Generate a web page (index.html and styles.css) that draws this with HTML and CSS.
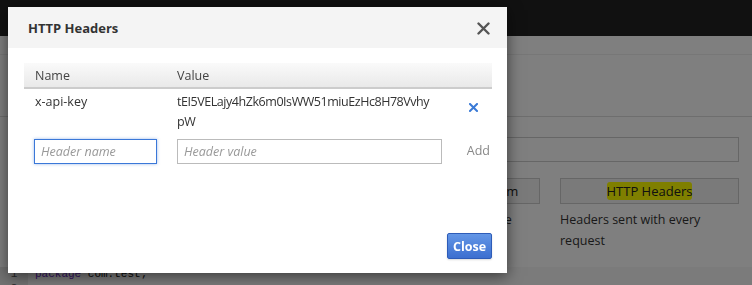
FILE: index.html
```html
<!DOCTYPE html>
<html lang="en">
<head>
    <meta charset="UTF-8">
    <meta name="viewport" content="width=device-width, initial-scale=1.0">
    <title>HTTP Headers</title>
    <link rel="stylesheet" href="styles.css">
</head>
<body>
    <div class="topbar"></div>

    <div class="page">
        <div class="page-head"></div>
        <div class="page-section">
            <div class="field-row">
                <div class="fake-input"></div>
            </div>
            <div class="option-grid">
                <div class="option">
                    <div class="option-btn">Request Body</div>
                    <div class="option-desc">Body sent with the request</div>
                </div>
                <div class="option">
                    <div class="option-btn">Request Body as Form</div>
                    <div class="option-desc">Form values posted in the request body</div>
                </div>
                <div class="option">
                    <div class="option-btn"><span class="highlight">HTTP Headers</span></div>
                    <div class="option-desc">Headers sent with every request</div>
                </div>
            </div>
        </div>
        <div class="editor">
            <div class="editor-line"><span class="gutter">1</span><span class="code"><span class="kw">package</span> com.test;</span></div>
            <div class="editor-line"><span class="gutter">2</span><span class="code"></span></div>
        </div>
    </div>

    <div class="overlay"></div>

    <div class="modal">
        <div class="modal-header">
            <h3>HTTP Headers</h3>
            <svg class="modal-close" width="13" height="13" viewBox="0 0 13 13">
                <path d="M1.5 1.5 L11.5 11.5 M11.5 1.5 L1.5 11.5" stroke="#555" stroke-width="2.4" stroke-linecap="round"/>
            </svg>
        </div>
        <div class="modal-body">
            <table class="headers-table">
                <colgroup>
                    <col style="width: 142px">
                    <col style="width: 279px">
                    <col style="width: 47px">
                </colgroup>
                <thead>
                    <tr>
                        <th>Name</th>
                        <th>Value</th>
                        <th></th>
                    </tr>
                </thead>
                <tbody>
                    <tr class="header-row">
                        <td>x-api-key</td>
                        <td class="value-cell">tEI5VELajy4hZk6m0IsWW51miuEzHc8H78Vvhy<wbr>pW</td>
                        <td class="action-cell">
                            <svg class="remove-icon" width="9" height="9" viewBox="0 0 9 9">
                                <path d="M1 1 L8 8 M8 1 L1 8" stroke="#3a7ad6" stroke-width="2" stroke-linecap="square"/>
                            </svg>
                        </td>
                    </tr>
                    <tr class="new-row">
                        <td><input type="text" class="focused" placeholder="Header name"></td>
                        <td class="value-cell"><input type="text" class="value-input" placeholder="Header value"></td>
                        <td class="add-cell">Add</td>
                    </tr>
                </tbody>
            </table>
        </div>
        <div class="modal-footer">
            <button class="btn-close">Close</button>
        </div>
    </div>
</body>
</html>
```

FILE: styles.css
```css
body {
    margin: 0;
    padding: 0;
    font-family: 'Open Sans', 'Noto Sans', sans-serif;
    background: #fff;
    color: #333;
    overflow: hidden;
    height: 285px;
}

/* page behind the dialog */

.topbar {
    height: 36px;
    background-color: #222;
}

.page-head {
    height: 18px;
    border-bottom: 1px solid #eee;
}

.page-section {
    padding: 0 13px 0 162px;
    border-top: 1px solid #ddd;
    margin-top: 61px;
}

.field-row {
    padding-top: 20px;
}

.fake-input {
    height: 23px;
    border: 1px solid #ccc;
}

.option-grid {
    display: grid;
    grid-template-columns: repeat(3, 1fr);
    gap: 20px;
    margin-top: 16px;
}

.option-btn {
    height: 24px;
    border: 1px solid #ccc;
    background: #f5f5f5;
    text-align: center;
    font-size: 13px;
    line-height: 24px;
    color: #222;
}

.highlight {
    background: #ffff00;
    border-radius: 3px;
}

.option-desc {
    font-size: 12.5px;
    line-height: 21px;
    color: #333;
    margin-top: 5px;
}

.editor {
    margin-top: 16px;
    background: #f7f7f7;
    font-family: 'Liberation Mono', monospace;
    font-size: 11px;
}

.editor-line {
    display: flex;
    height: 14px;
    line-height: 14px;
}

.gutter {
    width: 28px;
    background: #e4e4e4;
    color: #555;
    text-align: center;
}

.code {
    padding-left: 7px;
    color: #111;
}

.kw {
    color: #6b28c8;
}

.overlay {
    position: fixed;
    inset: 0;
    background: rgba(0, 0, 0, 0.5);
}

/* dialog */

.modal {
    position: absolute;
    left: 8px;
    top: 7px;
    width: 499px;
    height: 266px;
    background: #fff;
    box-shadow: 0 3px 14px rgba(0, 0, 0, 0.55);
    display: flex;
    flex-direction: column;
}

.modal-header {
    height: 41px;
    background: #f4f4f4;
    display: flex;
    align-items: center;
    justify-content: space-between;
    padding: 0 17px 0 20px;
}

.modal-header h3 {
    margin: 0;
    font-size: 13px;
    font-weight: 700;
    color: #333;
}

.modal-close {
    margin-top: 1px;
}

.modal-body {
    padding: 15px 15px 0 16px;
    flex: 1;
}

.headers-table {
    width: 468px;
    table-layout: fixed;
    border-collapse: collapse;
    font-size: 12.5px;
    color: #333;
}

.headers-table th {
    text-align: left;
    font-weight: 400;
    color: #444;
    height: 24px;
    padding: 0 11px;
    background: linear-gradient(#fafafa, #e9e9e9);
    border-bottom: 2px solid #ccc;
}

.headers-table td {
    padding: 3px 11px 0;
    line-height: 20px;
    vertical-align: top;
}

.value-cell {
    letter-spacing: -0.45px;
    padding-right: 3px !important;
}

.action-cell {
    text-align: right;
    padding-top: 9px !important;
    padding-right: 14px !important;
}

.header-row td {
    height: 37px;
}

.new-row td {
    padding-top: 4px;
    vertical-align: top;
}

.new-row td:first-child {
    padding-left: 10px;
    padding-right: 9px;
}

input {
    width: 100%;
    box-sizing: border-box;
    height: 25px;
    border: 1px solid #bbb;
    font-family: 'Open Sans', 'Noto Sans', sans-serif;
    font-size: 12.5px;
    letter-spacing: 0;
    padding: 0 6px;
    color: #333;
    outline: none;
}

input::placeholder {
    font-style: italic;
    color: #999;
}

input.focused {
    border-color: #3b78d8;
    box-shadow: 0 0 3px rgba(59, 120, 216, 0.5);
}

.add-cell {
    color: #888;
    padding-top: 9px !important;
    line-height: 14px !important;
    padding-left: 0 !important;
    padding-right: 2px !important;
    text-align: right;
}

.modal-footer {
    display: flex;
    justify-content: flex-end;
    padding: 0 15px 14px;
}

.btn-close {
    width: 45px;
    height: 26px;
    border: 1px solid #2e5cb8;
    border-radius: 2px;
    background: linear-gradient(#6396e6, #3c6fd0);
    color: #fff;
    font-family: 'Open Sans', 'Noto Sans', sans-serif;
    font-size: 12.5px;
    font-weight: 700;
    padding: 0;
    box-shadow: 0 1px 2px rgba(0, 0, 0, 0.15);
}
```
